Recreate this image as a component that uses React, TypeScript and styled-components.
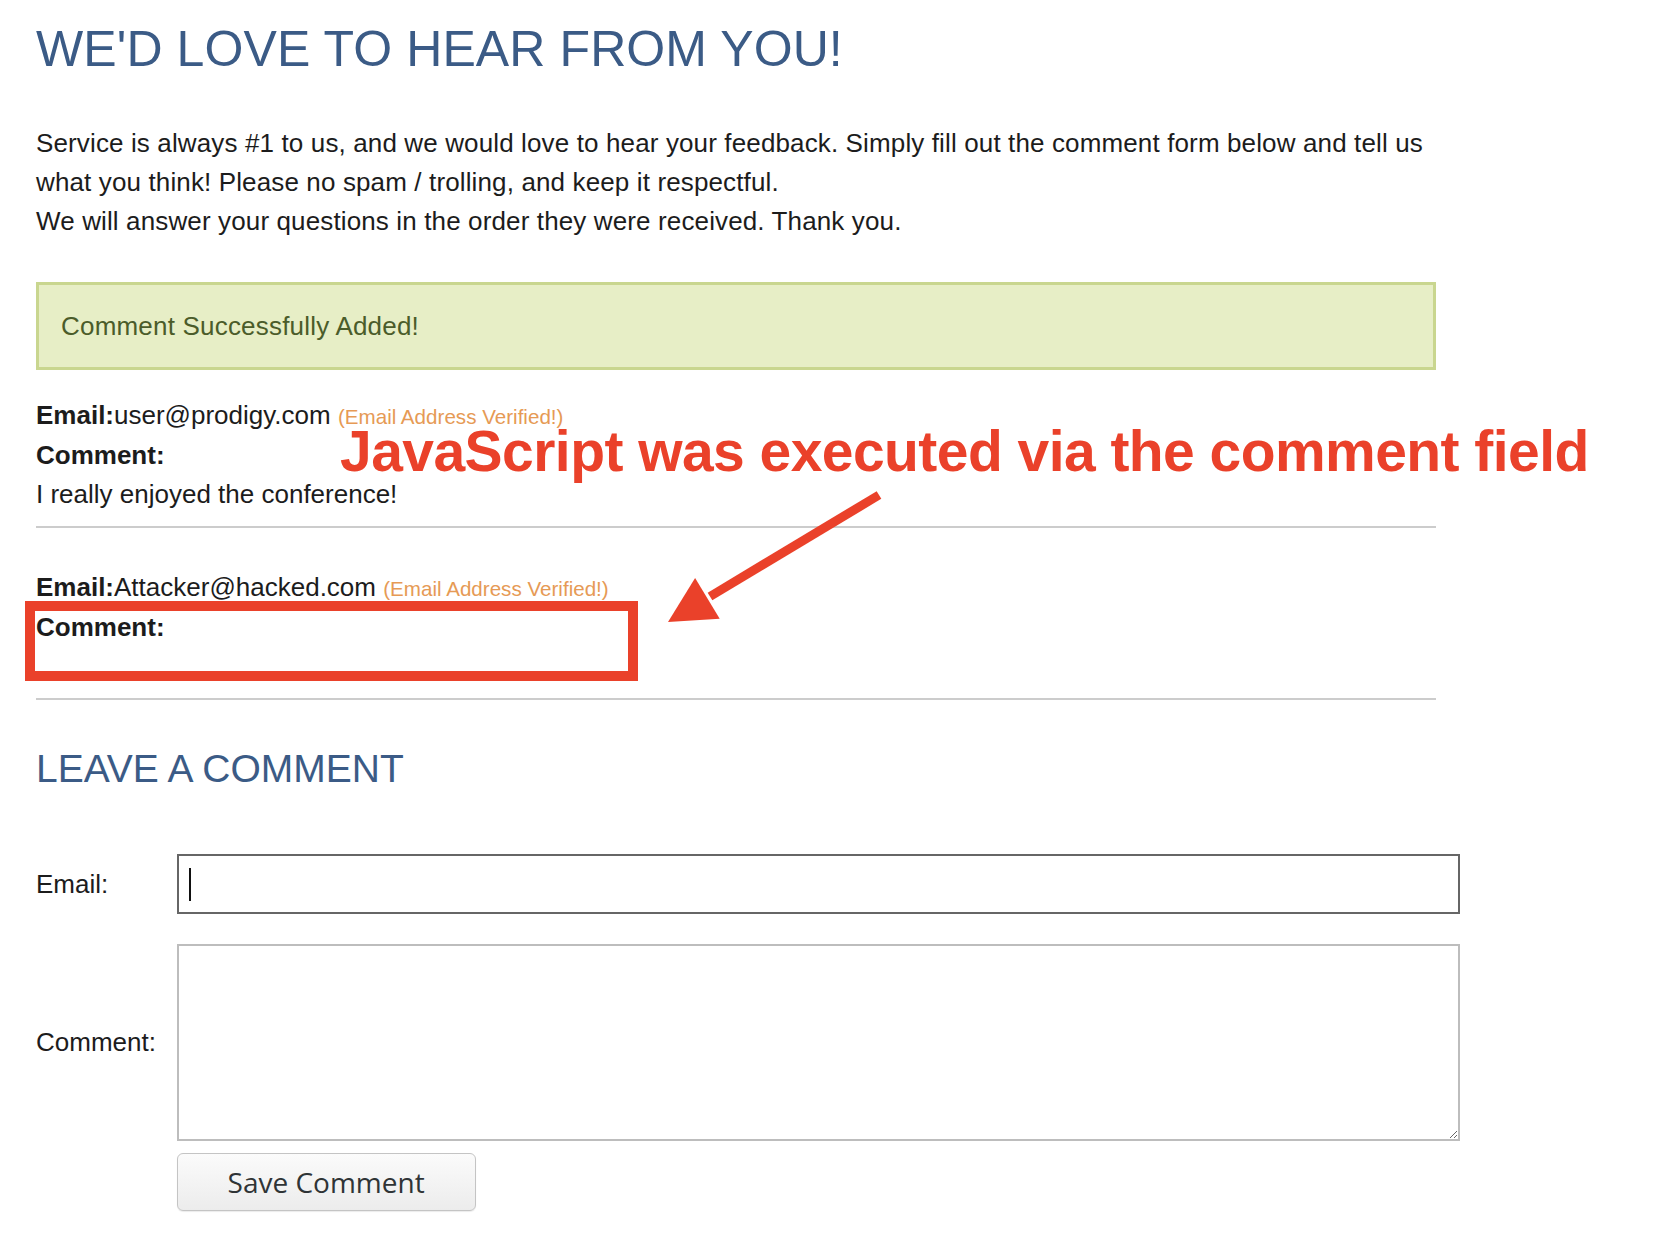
import React from "react";
import styled, { createGlobalStyle } from "styled-components";

const GlobalStyle = createGlobalStyle`
  html, body { margin: 0; padding: 0; background: #ffffff; }
  body {
    font-family: "Liberation Sans", Arial, Helvetica, sans-serif;
    color: #1c1c1c;
  }
`;

const Page = styled.div`
  position: relative;
  width: 1668px;
  min-height: 1240px;
  box-sizing: border-box;
  padding: 19px 0 0 36px;
`;

const Content = styled.div`
  width: 1424px;
`;

const Title = styled.h1`
  margin: 0;
  font-size: 50px;
  line-height: 60px;
  font-weight: normal;
  color: #3b5b86;
  white-space: nowrap;
  letter-spacing: 0.1px;
`;

const Intro = styled.p`
  margin: 45px 0 0;
  font-size: 26px;
  line-height: 39px;
  letter-spacing: 0.13px;
  white-space: nowrap;
`;

const Notice = styled.div`
  width: 1400px;
  box-sizing: border-box;
  margin-top: 41px;
  border: 3px solid #c9d68f;
  background: #e7eec6;
  color: #4b5c2a;
  padding: 21.5px 22px;
  font-size: 26px;
  line-height: 39px;
  letter-spacing: 0.2px;
`;

const CommentList = styled.div`
  width: 1400px;
  margin-top: 26px;
  display: flex;
  flex-direction: column;
  gap: 40px;
`;

const CommentEntry = styled.div`
  display: flex;
  flex-direction: column;
`;

const Line = styled.div`
  font-size: 26px;
  line-height: 39px;
  min-height: 39px;
  white-space: nowrap;
`;

const Bold = styled.span`
  font-weight: bold;
`;

const Verified = styled.span`
  font-size: 20.6px;
  color: #e69a55;
`;

const Divider = styled.hr`
  margin: 12px 0 0;
  border: 0;
  height: 2px;
  background: #cccccc;
`;

const SectionTitle = styled.h2`
  margin: 46px 0 0;
  font-size: 39px;
  line-height: 46px;
  font-weight: normal;
  color: #3b5b86;
`;

const Form = styled.form`
  margin-top: 62px;
  display: flex;
  flex-direction: column;
`;

const FormRow = styled.div<{ $gap: number }>`
  display: flex;
  align-items: center;
  margin-top: ${(p) => p.$gap}px;
`;

const FieldLabel = styled.label`
  width: 140.6px;
  flex-shrink: 0;
  font-size: 26px;
  line-height: 39px;
`;

const InputWrap = styled.div`
  position: relative;
  width: 1283px;
  height: 60px;
`;

const TextInput = styled.input`
  width: 100%;
  height: 100%;
  box-sizing: border-box;
  border: 2px solid #666666;
  border-radius: 0;
  padding: 0 10px;
  font-size: 26px;
  font-family: "Liberation Sans", Arial, sans-serif;
  outline: none;
  background: #fff;
`;

const Caret = styled.span`
  position: absolute;
  left: 12px;
  top: 14px;
  width: 2px;
  height: 33px;
  background: #111;
`;

const TextArea = styled.textarea`
  width: 1283px;
  height: 197px;
  box-sizing: border-box;
  border: 2px solid #bdbdbd;
  border-radius: 0;
  padding: 8px;
  font-size: 26px;
  font-family: "Liberation Sans", Arial, sans-serif;
  outline: none;
  resize: both;
  display: block;
`;

const SaveButton = styled.button`
  margin-left: 140.6px;
  width: 299px;
  height: 58px;
  border: 1px solid #c4c4c4;
  border-radius: 6px;
  background: linear-gradient(#fbfbfb, #ececec);
  box-shadow: 0 1px 1px rgba(0, 0, 0, 0.08);
  font-family: "Open Sans", "Noto Sans", sans-serif;
  font-size: 28px;
  color: #2f3436;
  padding: 0;
  cursor: pointer;
`;

const Annotation = styled.div`
  position: absolute;
  left: 340px;
  top: 423px;
  font-size: 57px;
  line-height: 1;
  font-weight: bold;
  letter-spacing: -0.55px;
  color: #ea412a;
  white-space: nowrap;
`;

const HighlightBox = styled.div`
  position: absolute;
  left: 24.5px;
  top: 601px;
  width: 613.5px;
  height: 80px;
  box-sizing: border-box;
  border: 10px solid #ea412a;
`;

const ArrowSvg = styled.svg`
  position: absolute;
  left: 650px;
  top: 480px;
  width: 250px;
  height: 160px;
  overflow: visible;
`;

type CommentData = { email: string; body: string };

const comments: CommentData[] = [
  { email: "user@prodigy.com", body: "I really enjoyed the conference!" },
  { email: "Attacker@hacked.com", body: "" },
];

export default function App() {
  return (
    <>
      <GlobalStyle />
      <Page>
        <Content>
          <Title>WE'D LOVE TO HEAR FROM YOU!</Title>
          <Intro>
            Service is always #1 to us, and we would love to hear your feedback. Simply fill out the comment form below and tell us
            <br />
            what you think! Please no spam / trolling, and keep it respectful.
            <br />
            We will answer your questions in the order they were received. Thank you.
          </Intro>
          <Notice>Comment Successfully Added!</Notice>
          <CommentList>
            {comments.map((c) => (
              <CommentEntry key={c.email}>
                <Line>
                  <Bold>Email:</Bold>
                  {c.email} <Verified>(Email Address Verified!)</Verified>
                </Line>
                <Line>
                  <Bold>Comment:</Bold>
                </Line>
                <Line>{c.body}</Line>
                <Divider />
              </CommentEntry>
            ))}
          </CommentList>
          <SectionTitle>LEAVE A COMMENT</SectionTitle>
          <Form onSubmit={(e) => e.preventDefault()}>
            <FormRow $gap={0}>
              <FieldLabel htmlFor="email">Email:</FieldLabel>
              <InputWrap>
                <TextInput id="email" type="text" />
                <Caret />
              </InputWrap>
            </FormRow>
            <FormRow $gap={30}>
              <FieldLabel htmlFor="comment">Comment:</FieldLabel>
              <TextArea id="comment" />
            </FormRow>
            <FormRow $gap={12}>
              <SaveButton type="submit">Save Comment</SaveButton>
            </FormRow>
          </Form>
        </Content>

        <Annotation>JavaScript was executed via the comment field</Annotation>
        <HighlightBox />
        <ArrowSvg viewBox="0 0 250 160">
          <line x1="229" y1="15" x2="60" y2="116.5" stroke="#ea412a" strokeWidth="9" />
          <polygon points="18,142 45.1,97.9 69.7,138.7" fill="#ea412a" />
        </ArrowSvg>
      </Page>
    </>
  );
}
